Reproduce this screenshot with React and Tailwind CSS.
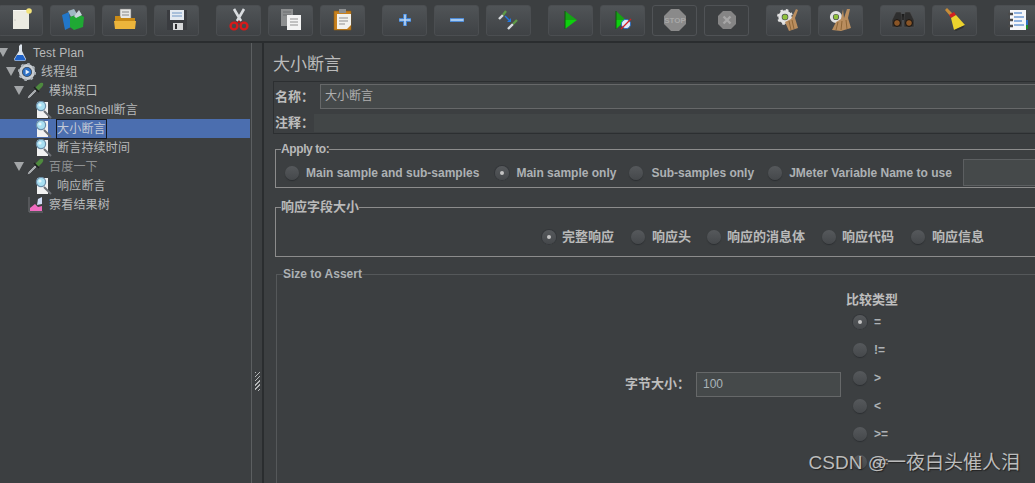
import React from 'react';

const sans = "font-['Liberation_Sans','Noto_Sans_CJK_SC',sans-serif]";

const ToolButton = ({ children, disabled }) => (
  <div
    className={`w-[45px] h-[31px] shrink-0 rounded-[3px] border flex items-center justify-center ${
      disabled ? 'border-[#505356] bg-[#3c3f41]' : 'border-[#4b4e51] bg-gradient-to-b from-[#505457] to-[#3f4245]'
    }`}
  >
    <svg width="24" height="24" viewBox="0 0 24 24">{children}</svg>
  </div>
);

const Radio = ({ checked }) => (
  <span
    className={`w-[14px] h-[14px] shrink-0 rounded-full flex items-center justify-center bg-gradient-to-b from-[#56595c] to-[#45484b] ${
      checked ? 'ring-1 ring-[#34373a] shadow-[0_1px_0_#55585a]' : 'shadow-[0_1px_1px_#2c2f31]'
    }`}
  >
    {checked && <span className="w-[4px] h-[4px] rounded-full bg-[#c4c4c4]" />}
  </span>
);

const RadioItem = ({ label, checked, className }) => (
  <div className={`flex items-center shrink-0 ${className}`}>
    <Radio checked={checked} />
    <span className="whitespace-nowrap">{label}</span>
  </div>
);

const Group = ({ legend, className, legendClass, children }) => (
  <fieldset className={`border -mr-6 ${className}`}>
    <legend className={`h-[14px] leading-[14px] font-bold whitespace-nowrap ${legendClass}`}>{legend}</legend>
    {children}
  </fieldset>
);

// tree icons
const Flask = () => (
  <svg width="18" height="18" viewBox="0 0 18 18">
    <path d="M10 0 L11 1 V7 L15 15 Q15 17 13 17 H5 Q3 17 3 15 L8 7 V2 Z" fill="#dfe6ee" />
    <path d="M6 11 H12 L14.5 15.5 Q14.5 16.5 13 16.5 H5 Q3.5 16.5 3.5 15.5 Z" fill="#1f62c8" />
  </svg>
);

const Gear = () => (
  <svg width="18" height="18" viewBox="0 0 18 18">
    <circle cx="9" cy="9" r="6.5" fill="none" stroke="#c9ced3" strokeWidth="3" />
    <circle cx="9" cy="9" r="8" fill="none" stroke="#aab0b6" strokeWidth="2.2" strokeDasharray="2.6 3.68" />
    <circle cx="9" cy="9" r="4.4" fill="#2c6fc4" />
    <path d="M7.6 6.6 L11.6 9 L7.6 11.4 Z" fill="#e6eef8" />
  </svg>
);

const Pipette = () => (
  <svg width="18" height="18" viewBox="0 0 18 18">
    <path d="M1 17 L2 14 L9 7 L11 9 L4 16 Z" fill="#a6aaad" stroke="#2b2d2f" strokeWidth="0.7" />
    <path d="M9 6 L13 2 Q15 0 17 1 Q18 3 16 5 L12 9 Z" fill="#4e8a3e" />
    <path d="M8 5 L13 10" stroke="#1d1f20" strokeWidth="1.4" />
  </svg>
);

const Assertion = () => (
  <svg width="18" height="18" viewBox="0 0 18 18">
    <path d="M2 1 H13 V17 H2 Z" fill="#f2f2f2" />
    <path d="M9 10 L16 17" stroke="#6c7075" strokeWidth="2" />
    <circle cx="6" cy="5" r="4.6" fill="#a9e0f2" stroke="#6d8ea8" strokeWidth="1.2" />
    <circle cx="5" cy="4" r="1.6" fill="#e4f7fd" />
  </svg>
);

const ResultTree = () => (
  <svg width="18" height="18" viewBox="0 0 18 18">
    <path d="M2 1 V16 H16" fill="none" stroke="#6e7074" strokeWidth="1" />
    <path d="M3 15 L3 12 L8 8 L11 11 L15 10 V15 Z" fill="#f06bc0" />
    <path d="M10 9 L11 3 L15 1 L15 8 Z" fill="#cfdcf5" />
  </svg>
);

const Triangle = ({ className }) => (
  <span className={`block shrink-0 w-0 h-0 border-x-[5px] border-x-transparent border-t-[9px] border-t-[#a3a6a8] ${className}`} />
);

const treeRows = [
  { label: 'Test Plan', pad: '-ml-[2px]', iconGap: 'mr-[3px]', icon: <Flask />, open: true },
  { label: '线程组', pad: 'pl-[6px]', iconGap: 'mr-[2px]', icon: <Gear />, open: true, textGap: 'ml-[5px]' },
  { label: '模拟接口', pad: 'pl-[14px]', iconGap: 'mr-[2px]', icon: <Pipette />, open: true, textGap: 'ml-[5px]' },
  { label: 'BeanShell断言', pad: 'pl-[35px]', icon: <Assertion /> },
  { label: '大小断言', pad: 'pl-[35px]', icon: <Assertion />, selected: true },
  { label: '断言持续时间', pad: 'pl-[35px]', icon: <Assertion /> },
  { label: '百度一下', pad: 'pl-[14px]', iconGap: 'mr-[2px]', icon: <Pipette />, open: true, dim: true, textGap: 'ml-[5px]' },
  { label: '响应断言', pad: 'pl-[35px]', icon: <Assertion /> },
  { label: '察看结果树', pad: 'pl-[27px]', icon: <ResultTree /> },
];

const Tree = () => (
  <div className="w-[250px] shrink-0">
    {treeRows.map((row) => (
      <div key={row.label} className={`h-[19px] flex items-center ${row.pad} ${row.selected ? 'bg-[#4b6eaf]' : ''}`}>
        {row.open && <Triangle className={row.iconGap} />}
        {row.icon}
        <span
          className={`text-[12px] leading-[18px] tracking-[0.2px] whitespace-nowrap ${row.dim ? 'text-[#8f9193]' : 'text-[#b7b9ba]'} ${
            row.selected ? 'border border-[#14171f] text-[#c4cad6] ml-[3px]' : row.textGap || 'ml-[4px]'
          }`}
        >
          {row.label}
        </span>
      </div>
    ))}
  </div>
);

const Toolbar = () => (
  <div className="h-[43px] border-b-2 border-[#2a2d2f] flex items-center -ml-[2px] shrink-0 overflow-hidden pb-[1px]">
    <div className="flex gap-[7px] mr-[17px]">
      <ToolButton>
        <path d="M4 2 H20 V21 H4 Z" fill="#ecebe2" />
        <path d="M4 2 H20 V3 H4 Z" fill="#f8f8f4" />
        <circle cx="20" cy="3" r="2.8" fill="#f2e27a" />
        <circle cx="6" cy="12" r="0.6" fill="#aaa" />
      </ToolButton>
      <ToolButton>
        <path d="M1 7 L8 4 L10 19 L4 22 Z" fill="#2277c9" />
        <path d="M7 3 L13 1 L16 6 L10 9 Z" fill="#9fb8c4" />
        <path d="M9 9 L18 6 L23 9 L22 19 L13 22 L9 19 Z" fill="#1fa834" />
        <path d="M13 8 L18 2 L21 7 L15 10 Z" fill="#c6d4da" />
      </ToolButton>
      <ToolButton>
        <path d="M7 1 H18 V12 H7 Z" fill="#e7e7e4" stroke="#777" strokeWidth="0.6" />
        <path d="M9 4 H16 M9 7 H16" stroke="#888" />
        <path d="M2 8 H7 L8 10 H22 V21 H2 Z" fill="#c98a16" />
        <path d="M1 13 H23 L22 21 H2 Z" fill="#edb53b" />
      </ToolButton>
      <ToolButton>
        <path d="M2 2 H22 V22 H2 Z" fill="#3a3c40" />
        <path d="M5 2 H19 V12 H5 Z" fill="#e4e9f0" />
        <path d="M7 5 H17 M7 8 H17" stroke="#6f95c4" />
        <path d="M8 15 H18 V22 H8 Z" fill="#d6d7d8" />
        <path d="M10 16 H12 V21 H10 Z" fill="#2c2c2e" />
      </ToolButton>
    </div>
    <div className="flex gap-[7px] mr-[17px]">
      <ToolButton>
        <path d="M7 1 L14 13 M17 1 L10 13" stroke="#d9dcdf" strokeWidth="2.6" />
        <circle cx="7" cy="18" r="3.4" fill="none" stroke="#d61a1a" strokeWidth="2.4" />
        <circle cx="17" cy="18" r="3.4" fill="none" stroke="#d61a1a" strokeWidth="2.4" />
        <path d="M10 15 L12 12 L14 15" fill="#b51414" />
      </ToolButton>
      <ToolButton>
        <path d="M2 1 H14 V18 H2 Z" fill="#8d8f90" />
        <path d="M4 4 H12 M4 7 H12" stroke="#6d6f70" />
        <path d="M8 7 H22 V22 H8 Z" fill="#f3f3f3" />
        <path d="M11 11 H19 M11 14 H19 M11 17 H19" stroke="#8f8f8f" />
      </ToolButton>
      <ToolButton>
        <path d="M3 3 H20 V22 H3 Z" fill="#c7811f" stroke="#8e5a12" strokeWidth="0.6" />
        <path d="M6 6 H20 L20 17 L16 21 H6 Z" fill="#f2f2ee" />
        <path d="M8 1 H15 V5 H8 Z" fill="#8d8f90" />
        <path d="M8 10 H17 M8 13 H17 M8 16 H14" stroke="#8f8f8f" />
      </ToolButton>
    </div>
    <div className="flex gap-[7px] mr-[17px]">
      <ToolButton>
        <path d="M12 6 V18 M6 12 H18" stroke="#3f7fce" strokeWidth="4" />
        <path d="M12 6.5 V17.5 M6.5 12 H17.5" stroke="#bcd8f5" strokeWidth="1.6" />
      </ToolButton>
      <ToolButton>
        <path d="M5 12 H19" stroke="#4d8ad6" strokeWidth="4" />
        <path d="M5.5 12 H18.5" stroke="#bcd8f5" strokeWidth="1.6" />
      </ToolButton>
      <ToolButton>
        <path d="M2 11 L6 7" stroke="#d8dcdf" strokeWidth="2.4" />
        <path d="M6 7 L9 3" stroke="#5e9a48" strokeWidth="2.4" />
        <path d="M11 21 L16 16" stroke="#d8dcdf" strokeWidth="2.4" />
        <path d="M16 16 L20 12" stroke="#5e9a48" strokeWidth="2.4" />
        <path d="M8 8 L12 12" stroke="#2277e0" strokeWidth="1.4" />
        <path d="M14 10 V14 H10 Z" fill="#2277e0" />
      </ToolButton>
    </div>
    <div className="flex gap-[7px] mr-[17px]">
      <ToolButton>
        <path d="M6 3 L18 12 L6 12 Z" fill="#16a316" />
        <path d="M6 12 H18 L6 21 Z" fill="#0ed00e" />
        <path d="M6 3 V21" stroke="#0b5c0b" strokeWidth="1" />
      </ToolButton>
      <ToolButton>
        <path d="M5 3 L15 12 L5 12 Z" fill="#16a316" />
        <path d="M5 12 H15 L5 21 Z" fill="#0ed00e" />
        <path d="M5 3 V21" stroke="#0b5c0b" strokeWidth="1" />
        <circle cx="15" cy="16" r="4.6" fill="#dfe8f6" stroke="#2f6fbf" strokeWidth="1" />
        <path d="M10 21 L20 11" stroke="#d32020" strokeWidth="1.2" />
      </ToolButton>
      <ToolButton disabled>
        <path d="M8 1 H16 L23 8 V16 L16 23 H8 L1 16 V8 Z" fill="#8a8a8a" />
        <text x="12" y="15" textAnchor="middle" fontSize="8" fontWeight="bold" fill="#a8a8a8" fontFamily="Liberation Sans">STOP</text>
      </ToolButton>
      <ToolButton disabled>
        <path d="M8 3 H16 L21 8 V16 L16 21 H8 L3 16 V8 Z" fill="#858585" />
        <path d="M8.5 8.5 L15.5 15.5 M15.5 8.5 L8.5 15.5" stroke="#a6a6a6" strokeWidth="2.4" />
      </ToolButton>
    </div>
    <div className="flex gap-[7px] mr-[17px]">
      <ToolButton>
        <circle cx="8" cy="9" r="5" fill="none" stroke="#e2e2e2" strokeWidth="3.4" />
        <circle cx="8" cy="9" r="7" fill="none" stroke="#e2e2e2" strokeWidth="2" strokeDasharray="2.6 3" />
        <circle cx="8" cy="9" r="2.6" fill="#8fc13c" />
        <path d="M19 1 L21 2 L18 10 L21 20 L12 23 L8 14 L14 11 Z" fill="#b98d5e" />
        <path d="M12 13 L14 22 M15 12 L17 21" stroke="#8d6536" />
      </ToolButton>
      <ToolButton>
        <circle cx="7" cy="9" r="4.6" fill="none" stroke="#e2e2e2" strokeWidth="3" />
        <circle cx="7" cy="9" r="2.4" fill="#8fc13c" />
        <path d="M14 1 L15 10 L18 1 L21 1 L19 10 L22 20 L12 23 L3 22 L7 14 L12 11 Z" fill="#b98d5e" />
        <path d="M9 14 L7 22 M13 13 L12 22 M17 12 L18 21" stroke="#8d6536" />
      </ToolButton>
    </div>
    <div className="flex gap-[7px] mr-[17px]">
      <ToolButton>
        <path d="M8 6 H16 V12 H8 Z" fill="#1d1d1d" />
        <path d="M5 4 H10 L11 10 L11 19 H1 L1 12 Z" fill="#2e2e2e" stroke="#555" strokeWidth="0.5" />
        <path d="M14 4 H19 L23 12 L23 19 H13 L13 10 Z" fill="#2e2e2e" stroke="#555" strokeWidth="0.5" />
        <circle cx="6" cy="15" r="3.4" fill="#8a5526" stroke="#111" strokeWidth="1" />
        <circle cx="18" cy="15" r="3.4" fill="#8a5526" stroke="#111" strokeWidth="1" />
      </ToolButton>
      <ToolButton>
        <path d="M2 2 L4 0 L11 7 L8 9 Z" fill="#c88d38" />
        <path d="M6 7 L11 4 L13 7 L8 10 Z" fill="#d12020" />
        <path d="M8 10 L13 7 L22 17 L11 22 Z" fill="#ecd32d" />
        <path d="M11 22 L22 17 L20 20 L13 23 Z" fill="#242424" opacity="0.6" />
      </ToolButton>
    </div>
    <ToolButton>
      <path d="M5 2 H21 V22 H5 Z" fill="#f6f7fa" />
      <path d="M21 12 H23 V17 H21 Z" fill="#2c6fc4" />
      <path d="M21 17 H23 V21 H21 Z" fill="#1d8a2c" />
      <path d="M9 5 H17 M9 9 H19 M9 13 H17 M9 17 H19" stroke="#2c6fc4" />
      <path d="M3 6 H8 M3 12 H8 M3 18 H8" stroke="#4a4a4a" strokeWidth="2.4" />
    </ToolButton>
  </div>
);

const Splitter = () => (
  <div className="w-[14px] shrink-0 flex">
    <div className="w-[12px] ml-[1px] border-l border-[#5c5f61] flex items-center pl-[3px] pt-[236px]">
      <div className="w-[5px] h-[19px] bg-[repeating-linear-gradient(135deg,#b5b7b8_0_1px,#3c3f41_1px_3px)]" />
    </div>
    <div className="w-[2px] -ml-[1px] bg-[#2a2d2f]" />
  </div>
);

export default function App() {
  return (
    <div className={`w-[1035px] h-[483px] overflow-hidden relative flex flex-col bg-[#3c3f41] ${sans}`}>
      <Toolbar />
      <div className="flex flex-1 min-h-0">
        <Tree />
        <Splitter />

        <div className="flex-1 min-w-0 overflow-hidden pl-[9px] pt-[11px]">
          <h1 className="text-[17px] leading-[21px] text-[#bbbbbb]">大小断言</h1>

          <div className="mt-[6px] border-y border-l border-[#2c2f31] pl-[1px] pt-[2px]">
            <div className="flex items-center h-[25px]">
              <span className="w-[45px] text-[13px] font-bold text-[#bdbdbd]">名称：</span>
              <div className="flex-1 h-[25px] border-y border-l border-[#666869] bg-[#45494a] pl-[4px] text-[12px] leading-[23px] text-[#b0b0b0]">大小断言</div>
            </div>
            <div className="flex items-center h-[24px] pt-[5px] pb-[1px]">
              <span className="w-[39px] text-[13px] font-bold text-[#bdbdbd] whitespace-nowrap">注释：</span>
              <div className="flex-1 h-[18px] bg-[#424647]" />
            </div>
          </div>

          <div className="pl-[2px]">
            <Group legend="Apply to:" className="mt-[8px] border-[#8c8c8c]" legendClass="ml-[5px] text-[12px] tracking-[-0.4px] text-[#b9b9b9]">
              <div className="flex items-center h-[27px] mt-[3px] mb-[1px] text-[12px] font-bold text-[#adb1b4]">
                <RadioItem label="Main sample and sub-samples" className="ml-[9px] gap-[7px]" />
                <RadioItem label="Main sample only" checked className="ml-[16px] gap-[7px]" />
                <RadioItem label="Sub-samples only" className="ml-[13px] gap-[8px]" />
                <RadioItem label="JMeter Variable Name to use" className="ml-[14px] gap-[7px]" />
                <div className="ml-[11px] w-[90px] h-[27px] shrink-0 border border-[#5c5f61] bg-[#45494a]" />
              </div>
            </Group>

            <Group legend="响应字段大小" className="mt-[12px] border-[#8c8c8c]" legendClass="ml-[5px] text-[13px] text-[#b9b9b9]">
              <div className="flex items-center h-[16px] mt-[15px] mb-[11px] pl-[266px] text-[13px] font-bold text-[#b9b9b9]">
                <RadioItem label="完整响应" checked className="gap-[6px]" />
                <RadioItem label="响应头" className="ml-[17px] gap-[7px]" />
                <RadioItem label="响应的消息体" className="ml-[16px] gap-[6px]" />
                <RadioItem label="响应代码" className="ml-[17px] gap-[6px]" />
                <RadioItem label="响应信息" className="ml-[17px] gap-[7px]" />
              </div>
            </Group>

            <Group legend="Size to Assert" className="mt-[10px] ml-[1px] border-[#55585a]" legendClass="ml-[6px] text-[12px] text-[#adb1b4]">
              <div className="flex items-center pl-[348px] pt-[11px] pb-[40px]">
                <span className="w-[60px] shrink-0 text-[13px] font-bold text-[#bdbdbd] whitespace-nowrap">字节大小：</span>
                <div className="ml-[11px] w-[145px] h-[25px] shrink-0 border border-[#666869] bg-[#45494a] pl-[6px] text-[12px] leading-[23px] text-[#a9b4b8]">100</div>
                <div className="ml-[5px] flex flex-col">
                  <span className="h-[16px] leading-[16px] text-[13px] font-bold text-[#bdbdbd]">比较类型</span>
                  {['=', '!=', '>', '<', '>=', '<='].map((op, i) => (
                    <RadioItem key={op} label={op} checked={i === 0} className="h-[28px] pl-[7px] gap-[7px] text-[12px] font-bold text-[#adb1b4]" />
                  ))}
                </div>
              </div>
            </Group>
          </div>
        </div>
      </div>

      <div className="absolute right-[15px] top-[450px] text-[19px] leading-[26px] text-[#d6d6d6]/85 [text-shadow:1px_1px_1px_#222] whitespace-nowrap">
        CSDN @一夜白头催人泪
      </div>
    </div>
  );
}
